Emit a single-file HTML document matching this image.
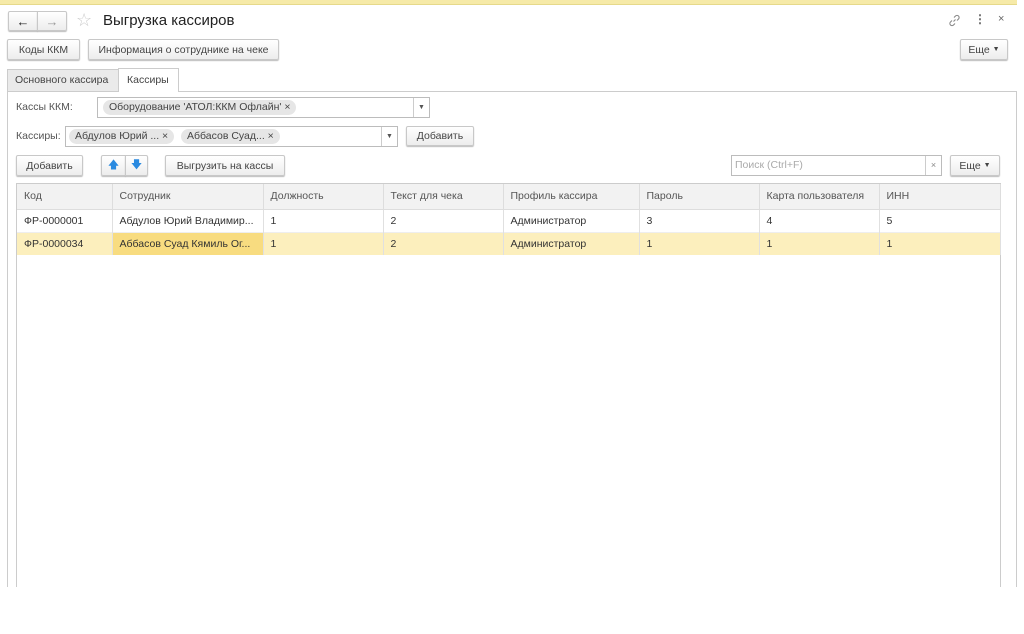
<!DOCTYPE html>
<html><head><meta charset="utf-8"><style>
*{box-sizing:border-box;margin:0;padding:0}
body{width:1024px;height:634px;background:#fff;font-family:"Liberation Sans",Arial,sans-serif;font-size:10.5px;color:#404040;position:relative;overflow:hidden}
.a{position:absolute}
.btn{position:absolute;border:1px solid #c8c8c8;border-radius:2px;background:linear-gradient(#fff,#ededed);box-shadow:0 1px 1px #bbb;display:flex;align-items:center;justify-content:center;color:#444;font-size:10.5px}
.field{position:absolute;border:1px solid #bcbcbc;background:#fff}
.chip{position:absolute;top:2px;height:15px;background:#e6e6e6;border-radius:8px;padding:0 6px;line-height:15px;color:#444;white-space:nowrap}
.dd{position:absolute;right:0;top:0;bottom:0;width:16px;border-left:1px solid #ccc;font-size:7px;display:flex;align-items:center;justify-content:center;color:#555}
table{border-collapse:collapse;table-layout:fixed}
td{height:23px;padding:0 7px;white-space:nowrap;overflow:hidden;border-right:1px solid #e0e0e0;color:#333}
tr.h td{height:25px;background:#f2f2f2;color:#555;border-bottom:1px solid #ddd;border-right:1px solid #ddd}
tr.s td{background:#fcefbd}
</style></head><body>
<div class="a" style="left:0;top:0;width:1017px;height:4px;background:#f6eaa8"></div>
<div class="a" style="left:0;top:4px;width:1017px;height:1px;background:#e6d98a"></div>
<div class="btn" style="left:8px;top:11px;width:30px;height:20px;border-radius:2px 0 0 2px;font-size:13px;color:#222">&#8592;</div>
<div class="btn" style="left:37px;top:11px;width:30px;height:20px;border-radius:0 2px 2px 0;font-size:13px;color:#999">&#8594;</div>
<div class="a" style="left:76px;top:10px;font-size:18px;color:#ccc">&#9734;</div>
<div class="a" style="left:103px;top:12px;font-size:15px;color:#222">Выгрузка кассиров</div>
<svg class="a" style="left:948px;top:14px" width="13" height="13" viewBox="0 0 13 13" fill="none" stroke="#888" stroke-width="1.1"><path d="M5.5 7.5l2-2M6 3.5l1.5-1.5a2 2 0 0 1 3 3L9 6.5M7 9.5L5.5 11a2 2 0 0 1-3-3L4 6.5"/></svg>
<div class="a" style="left:974px;top:12px;font-size:12px;color:#666;font-weight:bold">&#8942;</div>
<div class="a" style="left:998px;top:13px;font-size:11px;color:#666">&#215;</div>
<div class="btn" style="left:7px;top:39px;width:73px;height:21px">Коды ККМ</div>
<div class="btn" style="left:88px;top:39px;width:191px;height:21px">Информация о сотруднике на чеке</div>
<div class="btn" style="left:960px;top:39px;width:48px;height:21px">Еще&nbsp;<span style="font-size:7px">&#9660;</span></div>
<div class="a" style="left:7px;top:91px;width:1010px;height:496px;border:1px solid #ccc;border-bottom:none"></div>
<div class="a" style="left:7px;top:69px;width:112px;height:23px;background:#eaeaea;border:1px solid #ccc;line-height:21px;padding-left:7px;color:#444">Основного кассира</div>
<div class="a" style="left:118px;top:68px;width:61px;height:24px;background:#fff;border:1px solid #ccc;border-bottom:none;line-height:22px;padding-left:8px;color:#444">Кассиры</div>
<div class="a" style="left:16px;top:101px;color:#555">Кассы ККМ:</div>
<div class="field" style="left:97px;top:97px;width:333px;height:21px"><div class="chip" style="left:5px">Оборудование 'АТОЛ:ККМ Офлайн' &#215;</div><div class="dd">&#9660;</div></div>
<div class="a" style="left:16px;top:130px;color:#555">Кассиры:</div>
<div class="field" style="left:65px;top:126px;width:333px;height:21px"><div class="chip" style="left:3px">Абдулов Юрий ... &#215;</div><div class="chip" style="left:115px">Аббасов Суад... &#215;</div><div class="dd">&#9660;</div></div>
<div class="btn" style="left:406px;top:126px;width:68px;height:20px">Добавить</div>
<div class="btn" style="left:16px;top:155px;width:67px;height:21px">Добавить</div>
<div class="btn" style="left:101px;top:155px;width:25px;height:21px;border-radius:2px 0 0 2px;color:#2a8ae0;font-size:11px">&#129093;</div>
<div class="btn" style="left:125px;top:155px;width:23px;height:21px;border-radius:0 2px 2px 0;color:#2a8ae0;font-size:11px">&#129095;</div>
<div class="btn" style="left:165px;top:155px;width:120px;height:21px">Выгрузить на кассы</div>
<div class="field" style="left:731px;top:155px;width:211px;height:21px;color:#aaa;line-height:19px;padding-left:3px">Поиск (Ctrl+F)<div class="dd" style="font-size:9px;color:#888">&#215;</div></div>
<div class="btn" style="left:950px;top:155px;width:50px;height:21px">Еще&nbsp;<span style="font-size:7px">&#9660;</span></div>
<div class="a" style="left:16px;top:183px;width:985px;height:404px;border:1px solid #ccc;border-bottom:none">
<table style="width:983px">
<colgroup><col style="width:95px"><col style="width:151px"><col style="width:120px"><col style="width:120px"><col style="width:136px"><col style="width:120px"><col style="width:120px"><col style="width:121px"></colgroup>
<tr class="h"><td>Код</td><td>Сотрудник</td><td>Должность</td><td>Текст для чека</td><td>Профиль кассира</td><td>Пароль</td><td>Карта пользователя</td><td>ИНН</td></tr>
<tr style="border-bottom:1px solid #eee"><td>ФР-0000001</td><td>Абдулов Юрий Владимир...</td><td>1</td><td>2</td><td>Администратор</td><td>3</td><td>4</td><td>5</td></tr>
<tr class="s"><td>ФР-0000034</td><td style="background:#f8dc80">Аббасов Суад Кямиль Ог...</td><td>1</td><td>2</td><td>Администратор</td><td>1</td><td>1</td><td>1</td></tr>
</table></div>
</body></html>
